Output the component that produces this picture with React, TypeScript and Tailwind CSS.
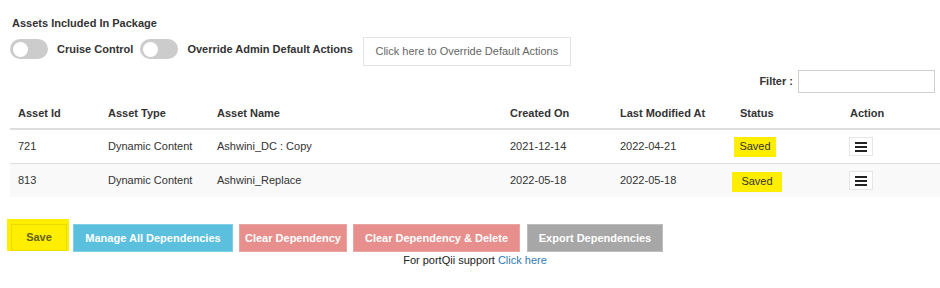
import React from "react";

type Asset = {
  id: string;
  type: string;
  name: string;
  created: string;
  modified: string;
  status: string;
};

const assets: Asset[] = [
  { id: "721", type: "Dynamic Content", name: "Ashwini_DC : Copy", created: "2021-12-14", modified: "2022-04-21", status: "Saved" },
  { id: "813", type: "Dynamic Content", name: "Ashwini_Replace", created: "2022-05-18", modified: "2022-05-18", status: "Saved" },
];

const cols = "grid grid-cols-[90px_109px_293px_110px_120px_110px_98px]";

function Toggle() {
  return (
    <div className="mt-[2px] flex h-[20px] w-[38px] items-center rounded-full bg-[#cccccc] px-[3px]">
      <div className="h-[15px] w-[15px] rounded-full bg-white" />
    </div>
  );
}

function MenuButton() {
  return (
    <button className="ml-[7px] flex h-[19px] w-[24px] flex-col items-center justify-center gap-[2px] border border-[#e6e6e6] bg-white">
      <span className="h-[2px] w-[12px] bg-[#222]" />
      <span className="h-[2px] w-[12px] bg-[#222]" />
      <span className="h-[2px] w-[12px] bg-[#222]" />
    </button>
  );
}

export default function App() {
  return (
    <div className="h-[288px] w-[940px] bg-white pl-[10px] pt-[17px] font-['Liberation_Sans',Arial,sans-serif] text-[11px] text-[#333]">
      <h3 className="ml-[2px] font-bold leading-[13px]">Assets Included In Package</h3>

      <div className="mt-[7px] flex items-start">
        <Toggle />
        <span className="ml-[9px] mt-[2px] font-bold leading-[20px]">Cruise Control</span>
        <div className="ml-[7px]">
          <Toggle />
        </div>
        <span className="ml-[9px] mt-[2px] font-bold leading-[20px]">Override Admin Default Actions</span>
        <button className="ml-[10px] h-[29px] w-[208px] border border-[#e3e3e3] bg-white text-[11px] text-[#666]">
          Click here to Override Default Actions
        </button>
      </div>

      <div className="mt-[4px] flex items-center justify-end pr-[5px]">
        <label className="font-bold">Filter :</label>
        <input className="ml-[5px] h-[23px] w-[137px] border border-[#cfcfcf] bg-white outline-none" />
      </div>

      <div className="mt-[5px]">
        <div className={`${cols} h-[32px] items-center border-b-2 border-[#dddddd] font-bold`}>
          <div className="pl-[8px]">Asset Id</div>
          <div className="pl-[8px]">Asset Type</div>
          <div className="pl-[8px]">Asset Name</div>
          <div className="pl-[8px]">Created On</div>
          <div className="pl-[8px]">Last Modified At</div>
          <div className="pl-[8px]">Status</div>
          <div className="pl-[8px]">Action</div>
        </div>
        {assets.map((a, i) => (
          <div
            key={a.id}
            className={`${cols} items-center ${i === 0 ? "h-[33px] bg-white" : "h-[34px] border-t border-[#dddddd] bg-[#f9f9f9]"}`}
          >
            <div className="pl-[8px]">{a.id}</div>
            <div className="pl-[8px]">{a.type}</div>
            <div className="pl-[8px]">{a.name}</div>
            <div className="pl-[8px]">{a.created}</div>
            <div className="pl-[8px]">{a.modified}</div>
            <div>
              <span
                className={`flex h-[20px] items-center justify-center bg-[#ffee00] ${i === 0 ? "ml-[2px] w-[42px]" : "mt-[2px] w-[50px]"}`}
              >
                {a.status}
              </span>
            </div>
            <div>
              <MenuButton />
            </div>
          </div>
        ))}
      </div>

      <div className="mt-[22px] flex items-start font-bold">
        <div className="ml-[-3px] h-[32px] w-[62px] bg-[#ffee00] pl-[4px] pt-[5px]">
          <div className="flex h-[27px] w-[56px] items-center justify-center border border-[#e8dc00] text-[#66621a]">
            Save
          </div>
        </div>
        <button className="ml-[4px] mt-[5px] h-[28px] w-[160px] border border-[#7fcfe6] bg-[#5bc0de] text-white">
          Manage All Dependencies
        </button>
        <button className="ml-[6px] mt-[5px] h-[28px] w-[108px] border border-[#eaa4a1] bg-[#e68f8c] text-white">
          Clear Dependency
        </button>
        <button className="ml-[6px] mt-[5px] h-[28px] w-[167px] border border-[#eaa4a1] bg-[#e68f8c] text-white">
          Clear Dependency &amp; Delete
        </button>
        <button className="ml-[7px] mt-[5px] h-[28px] w-[136px] border border-[#bdbdbd] bg-[#a7a7a7] text-white">
          Export Dependencies
        </button>
      </div>

      <p className="mt-[2px] text-center leading-[13px] text-[#222]">
        For portQii support <a className="text-[#337ab7]">Click here</a>
      </p>
    </div>
  );
}
